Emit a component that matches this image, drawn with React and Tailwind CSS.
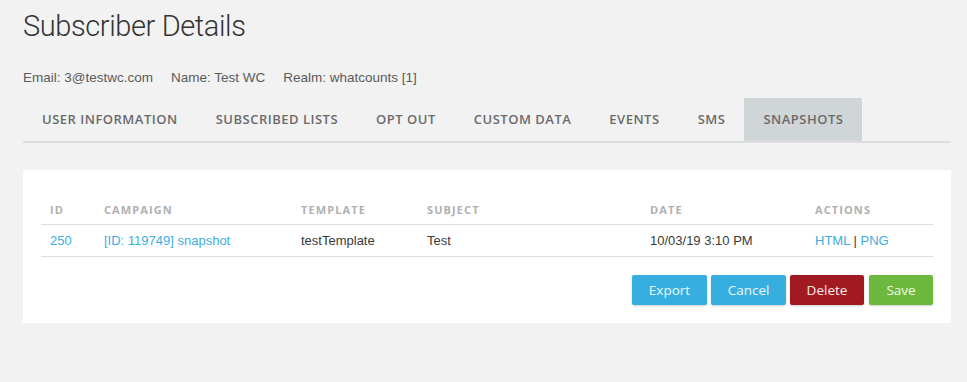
export default function App() {
  const tabs = ["USER INFORMATION", "SUBSCRIBED LISTS", "OPT OUT", "CUSTOM DATA", "EVENTS", "SMS", "SNAPSHOTS"];
  const helv = { fontFamily: '"Liberation Sans", Arial, sans-serif' };
  const cols = "grid grid-cols-[54px_197px_126px_223px_165px_125px]";
  return (
    <div className="w-[967px] h-[382px] bg-[#f2f2f2] overflow-hidden" style={helv}>
      <div className="pl-[23px] pr-[16px]">
        <h1 className="pt-[9px] text-[29px] leading-[34px] font-light text-[#333] tracking-[-0.4px]" style={{ fontFamily: 'Roboto, "Liberation Sans", sans-serif', fontWeight: 300 }}>
          Subscriber Details
        </h1>
        <div className="mt-[27px] flex gap-[18px] text-[13.5px] leading-[16px] text-[#5a5a5a]">
          <span>Email: 3@testwc.com</span>
          <span>Name: Test WC</span>
          <span>Realm: whatcounts [1]</span>
        </div>
        <div className="mt-[12px] flex border-b-2 border-[#dedede] h-[45px]">
          {tabs.map((t, i) => (
            <div
              key={t}
              className={`px-[19px] flex items-center text-[13px] font-semibold tracking-[0.5px] text-[#6a6a6a] ${i === 6 ? "bg-[#d0d5d8]" : ""}`}
              style={{ fontFamily: '"Open Sans", sans-serif' }}
            >
              {t}
            </div>
          ))}
        </div>
        <div className="mt-[27px] bg-white h-[153px] px-[18px] pt-[30px]">
          <div className={`${cols} border-b border-[#dddddd] h-[25px] text-[11px] font-bold tracking-[1.1px] text-[#b0b0b0]`} style={{ fontFamily: '"Open Sans", sans-serif' }}>
            {["ID", "CAMPAIGN", "TEMPLATE", "SUBJECT", "DATE", "ACTIONS"].map((h) => (
              <div key={h} className="pl-[9px] leading-[20px]">{h}</div>
            ))}
          </div>
          <div className={`${cols} border-b border-[#dddddd] h-[32px] items-center text-[13px] text-[#3a3a3a]`}>
            <div className="pl-[9px] text-[#3aaee0]">250</div>
            <div className="pl-[9px] text-[#3aaee0]">[ID: 119749] snapshot</div>
            <div className="pl-[9px]">testTemplate</div>
            <div className="pl-[9px]">Test</div>
            <div className="pl-[9px]">10/03/19 3:10 PM</div>
            <div className="pl-[9px]">
              <span className="text-[#3aaee0]">HTML</span> | <span className="text-[#3aaee0]">PNG</span>
            </div>
          </div>
          <div className="flex justify-end gap-[4px] mt-[18px]" style={{ fontFamily: '"Open Sans", sans-serif' }}>
            <button className="w-[75px] h-[30px] rounded-[2px] bg-[#37aee0] text-white/90 text-[13.5px] shadow-[0_1px_2px_rgba(0,0,0,0.2)]">Export</button>
            <button className="w-[75px] h-[30px] rounded-[2px] bg-[#37aee0] text-white/90 text-[13.5px] shadow-[0_1px_2px_rgba(0,0,0,0.2)]">Cancel</button>
            <button className="w-[74px] h-[30px] rounded-[2px] bg-[#a11a22] text-white/90 text-[13.5px] shadow-[0_1px_2px_rgba(0,0,0,0.2)]">Delete</button>
            <button className="ml-[1px] w-[64px] h-[30px] rounded-[2px] bg-[#6db93d] text-white/90 text-[13.5px] shadow-[0_1px_2px_rgba(0,0,0,0.2)]">Save</button>
          </div>
        </div>
      </div>
    </div>
  );
}
